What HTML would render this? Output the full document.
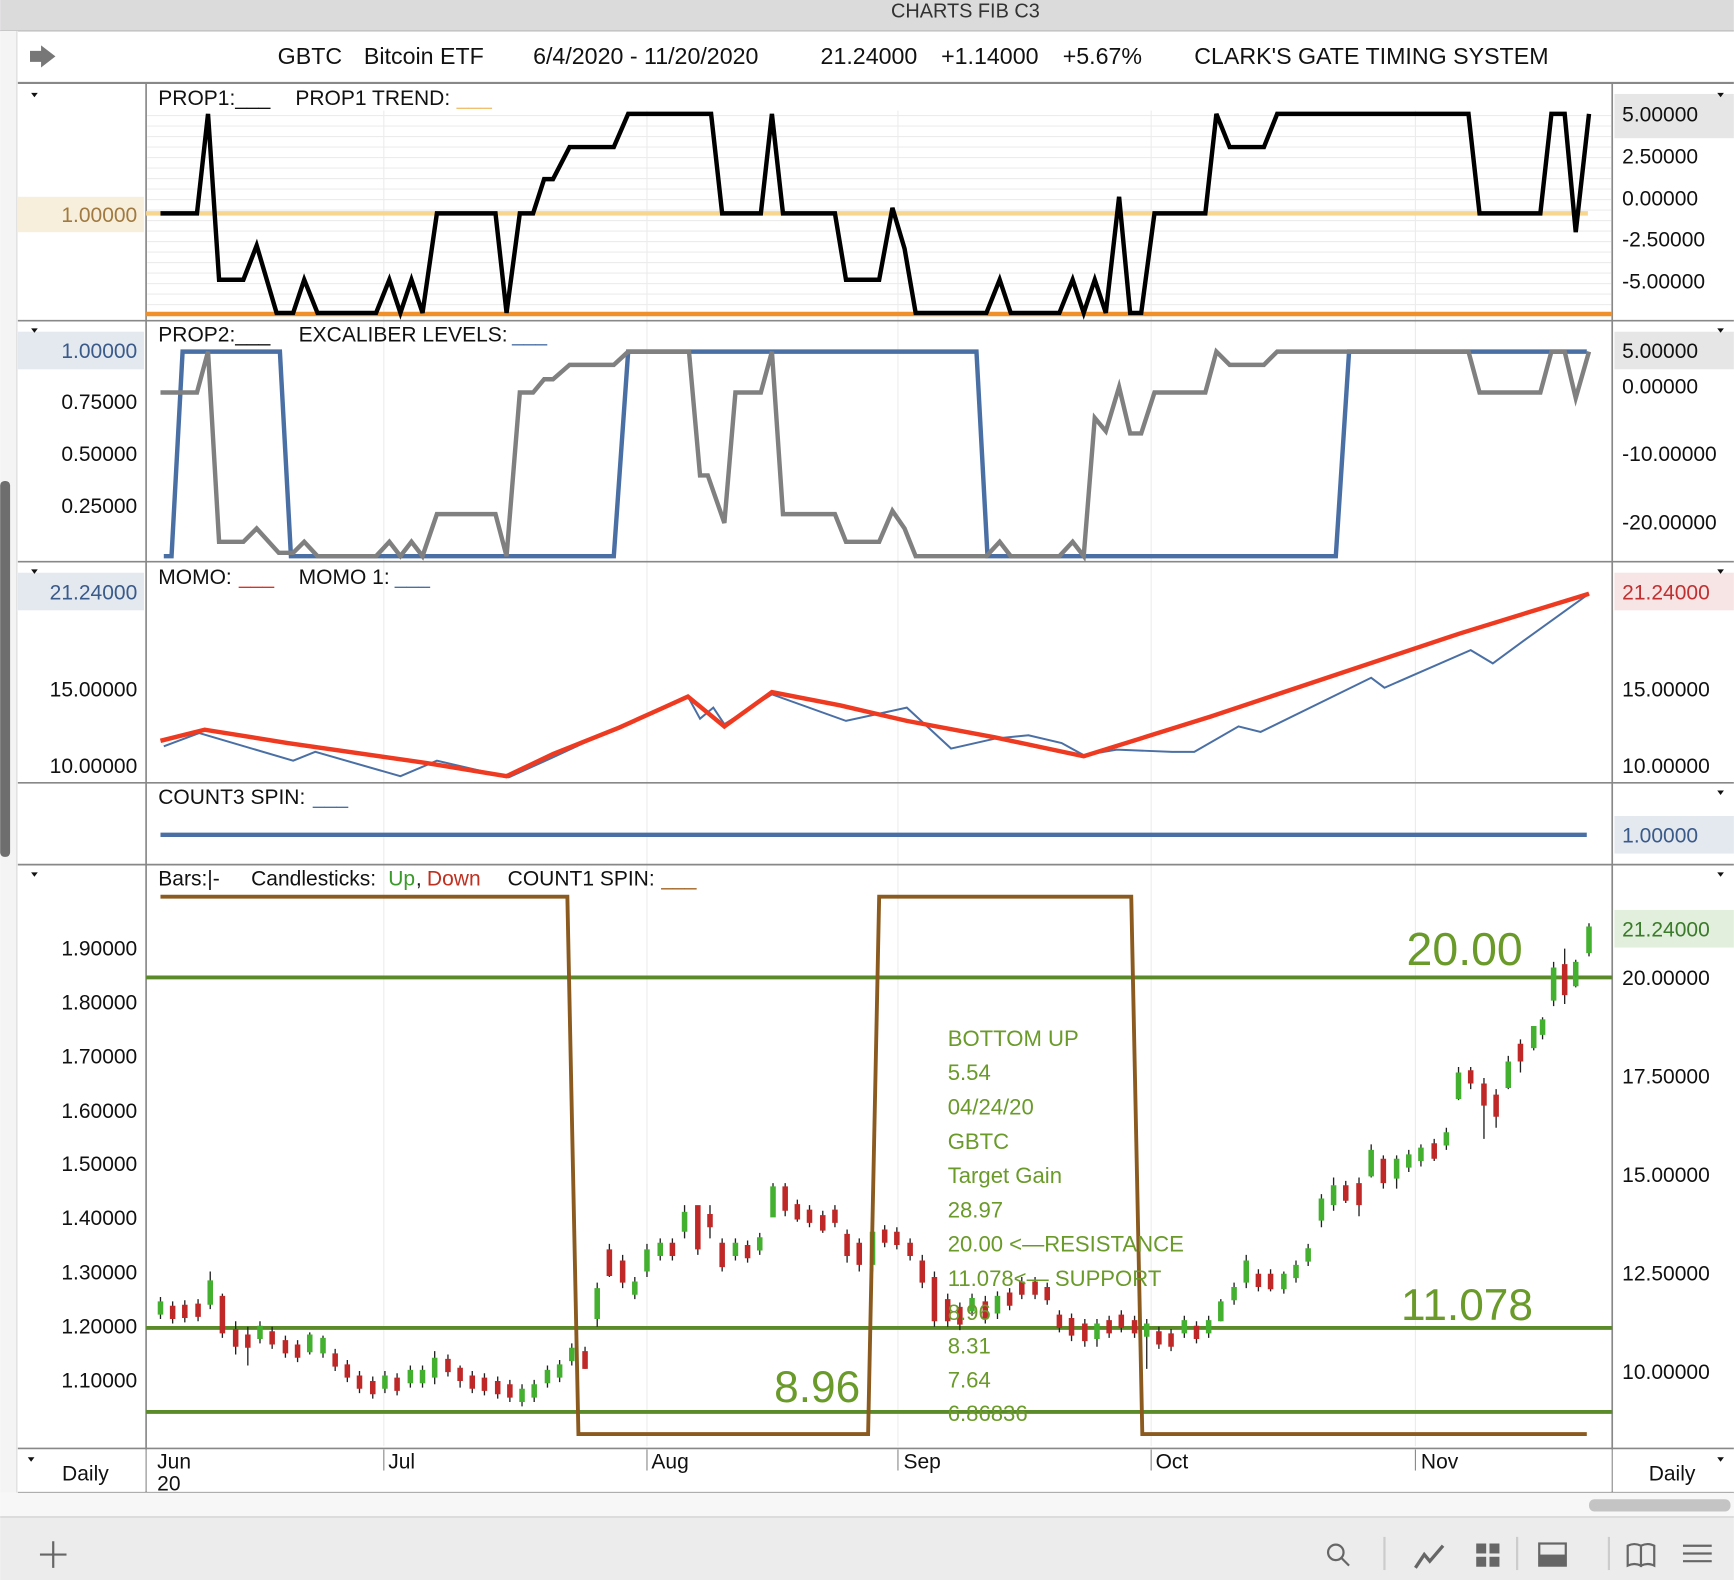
<!DOCTYPE html>
<html><head><meta charset="utf-8"><style>
html,body{margin:0;padding:0;background:#fff;}
svg{display:block;font-family:"Liberation Sans",sans-serif;}
</style></head><body>
<svg width="1734" height="1580" viewBox="0 0 1568 1429" xmlns="http://www.w3.org/2000/svg">
<defs>
<pattern id="hg" x="0" y="104" width="20" height="9.5" patternUnits="userSpaceOnUse"><line x1="0" y1="0.5" x2="20" y2="0.5" stroke="#ececec" stroke-width="1"/></pattern>
</defs>
<rect x="0" y="0" width="1568" height="1429" fill="#fff"/>
<rect x="0" y="0" width="1568" height="28" fill="#dcdbdc"/>
<line x1="0" y1="28" x2="1568" y2="28" stroke="#b8b8b8"/>
<text x="873" y="16" font-size="18" text-anchor="middle" fill="#333">CHARTS FIB C3</text>
<rect x="0" y="28" width="16" height="1322" fill="#f4f4f4"/>
<line x1="15" y1="28" x2="15" y2="1350" stroke="#ddd"/>
<rect x="0" y="435" width="9" height="340" rx="4" fill="#6e6e6e"/>
<path d="M27 46 L37 46 L37 41 L50 51 L37 61 L37 56 L27 56 Z" fill="#777"/>
<g font-size="21" fill="#111">
<text x="251" y="58">GBTC</text><text x="329" y="58">Bitcoin ETF</text>
<text x="482" y="58">6/4/2020 - 11/20/2020</text>
<text x="742" y="58">21.24000</text><text x="851" y="58">+1.14000</text><text x="961" y="58">+5.67%</text>
<text x="1080" y="58">CLARK'S GATE TIMING SYSTEM</text>
</g>
<line x1="16" y1="75" x2="1568" y2="75" stroke="#888" stroke-width="2"/>
<!-- grid -->
<rect x="133" y="104" width="1324" height="180" fill="url(#hg)"/>
<g stroke="#ececec" stroke-width="1">
<line x1="347" y1="100" x2="347" y2="1308"/><line x1="585" y1="100" x2="585" y2="1308"/><line x1="812" y1="100" x2="812" y2="1308"/><line x1="1041" y1="100" x2="1041" y2="1308"/><line x1="1280" y1="100" x2="1280" y2="1308"/>
</g>
<g stroke="#888" stroke-width="1.5">
<line x1="132" y1="75" x2="132" y2="1350"/><line x1="1458" y1="75" x2="1458" y2="1350"/>
<line x1="16" y1="290" x2="1568" y2="290"/><line x1="16" y1="508" x2="1568" y2="508"/>
<line x1="16" y1="708" x2="1568" y2="708"/><line x1="16" y1="782" x2="1568" y2="782"/>
<line x1="16" y1="1310" x2="1568" y2="1310"/><line x1="16" y1="1350" x2="1568" y2="1350"/>
</g>
<!-- panel 1 -->
<rect x="16" y="178" width="114" height="32" fill="#f7efdc"/>
<text x="124" y="201" font-size="19" fill="#a07a40" text-anchor="end">1.00000</text>
<rect x="1460" y="85" width="108" height="40" fill="#e6e6e6"/>
<g font-size="19" fill="#111">
<text x="1467" y="110">5.00000</text><text x="1467" y="148">2.50000</text><text x="1467" y="186">0.00000</text><text x="1467" y="223">-2.50000</text><text x="1467" y="261">-5.00000</text>
<text x="143" y="95">PROP1:___</text><text x="267" y="95">PROP1 TREND:</text>
</g>
<text x="413" y="95" font-size="19" fill="#f0c070">___</text>
<line x1="132" y1="193" x2="1436" y2="193" stroke="#f7d690" stroke-width="4"/>
<line x1="132" y1="284" x2="1458" y2="284" stroke="#f0902a" stroke-width="4"/>
<polyline fill="none" stroke="#000" stroke-width="4" points="145,193 178,193 188,103 198,253 220,253 232,222 250,283 265,283 275,253 287,283 340,283 352,253 362,283 372,253 382,283 395,193 448,193 458,283 470,193 482,193 492,162 500,162 515,133 555,133 568,103 643,103 653,193 688,193 698,103 708,193 755,193 765,253 795,253 807,188 818,225 828,283 892,283 904,253 914,283 958,283 970,253 980,283 990,253 1000,283 1012,178 1022,283 1032,283 1044,193 1090,193 1100,103 1112,133 1143,133 1155,103 1328,103 1338,193 1393,193 1403,103 1415,103 1425,210 1437,103"/>
<!-- panel 2 -->
<rect x="16" y="300" width="114" height="34" fill="#e4e8ef"/>
<rect x="1460" y="300" width="108" height="34" fill="#e6e6e6"/>
<g font-size="19" fill="#111">
<text x="124" y="324" text-anchor="end" fill="#3a5a8a">1.00000</text><text x="124" y="370" text-anchor="end">0.75000</text><text x="124" y="417" text-anchor="end">0.50000</text><text x="124" y="464" text-anchor="end">0.25000</text>
<text x="1467" y="324">5.00000</text><text x="1467" y="356">0.00000</text><text x="1467" y="417">-10.00000</text><text x="1467" y="479">-20.00000</text>
<text x="143" y="309">PROP2:___</text><text x="270" y="309">EXCALIBER LEVELS:</text>
</g>
<text x="463" y="309" font-size="19" fill="#4a6fa5">___</text>
<polyline fill="none" stroke="#4a6fa5" stroke-width="4" points="148,503 155,503 165,318 253,318 263,503 555,503 568,318 883,318 893,503 1208,503 1220,318 1435,318"/>
<polyline fill="none" stroke="#808080" stroke-width="4" points="145,355 178,355 188,318 198,490 220,490 232,478 252,500 265,500 275,490 287,503 340,503 352,490 362,503 372,490 382,503 395,465 448,465 458,503 470,355 482,355 492,343 500,343 515,330 555,330 568,318 623,318 633,430 640,430 655,473 665,355 688,355 698,318 708,465 755,465 765,490 795,490 807,462 818,478 828,503 892,503 904,490 914,503 958,503 970,490 980,503 990,378 1000,390 1012,350 1022,392 1032,392 1044,355 1090,355 1100,318 1112,330 1143,330 1155,318 1328,318 1338,355 1393,355 1403,318 1415,318 1425,360 1437,318"/>
<!-- panel 3 -->
<rect x="16" y="518" width="114" height="34" fill="#e4e8ef"/>
<rect x="1460" y="518" width="108" height="34" fill="#f7e4e4"/>
<g font-size="19" fill="#111">
<text x="124" y="542" text-anchor="end" fill="#3a5a8a">21.24000</text><text x="124" y="630" text-anchor="end">15.00000</text><text x="124" y="699" text-anchor="end">10.00000</text>
<text x="1467" y="542" fill="#c03030">21.24000</text><text x="1467" y="630">15.00000</text><text x="1467" y="699">10.00000</text>
<text x="143" y="528">MOMO:</text><text x="270" y="528">MOMO 1:</text>
</g>
<text x="216" y="528" font-size="19" fill="#e03020">___</text><text x="357" y="528" font-size="19" fill="#4a6fa5">___</text>
<polyline fill="none" stroke="#4a6fa5" stroke-width="1.8" points="148,675 180,663 265,688 285,680 362,702 395,688 460,703 500,685 560,657 622,630 633,650 645,640 655,655 698,628 765,652 820,640 860,677 900,668 930,665 960,672 980,683 1010,678 1060,680 1080,680 1120,657 1140,662 1240,613 1252,622 1330,588 1350,600 1380,578 1437,537"/>
<polyline fill="none" stroke="#ee3a20" stroke-width="4" points="145,670 185,660 260,672 385,690 458,702 500,682 560,658 600,640 622,630 655,657 698,626 760,638 820,652 900,667 980,684 1095,648 1320,573 1437,537"/>
<!-- panel 4 -->
<text x="143" y="727" font-size="19" fill="#111">COUNT3 SPIN:</text><text x="283" y="727" font-size="19" fill="#4a6fa5">___</text>
<line x1="145" y1="755" x2="1435" y2="755" stroke="#4a6fa5" stroke-width="4"/>
<rect x="1460" y="738" width="108" height="34" fill="#e4e8ef"/>
<text x="1467" y="762" font-size="19" fill="#3a5a8a">1.00000</text>
<!-- panel 5 -->
<g font-size="19" fill="#111">
<text x="143" y="801">Bars:|-</text><text x="227" y="801">Candlesticks:</text><text x="459" y="801">COUNT1 SPIN:</text>
<text x="124" y="864" text-anchor="end">1.90000</text><text x="124" y="913" text-anchor="end">1.80000</text><text x="124" y="962" text-anchor="end">1.70000</text><text x="124" y="1011" text-anchor="end">1.60000</text><text x="124" y="1059" text-anchor="end">1.50000</text><text x="124" y="1108" text-anchor="end">1.40000</text><text x="124" y="1157" text-anchor="end">1.30000</text><text x="124" y="1206" text-anchor="end">1.20000</text><text x="124" y="1255" text-anchor="end">1.10000</text>
<text x="1467" y="891">20.00000</text><text x="1467" y="980">17.50000</text><text x="1467" y="1069">15.00000</text><text x="1467" y="1158">12.50000</text><text x="1467" y="1247">10.00000</text>
</g>
<text x="351" y="801" font-size="19" fill="#3a9a2a">Up</text><text x="376" y="801" font-size="19" fill="#111">,</text><text x="386" y="801" font-size="19" fill="#c03020">Down</text>
<text x="598" y="801" font-size="19" fill="#a0601e">___</text>
<rect x="1460" y="823" width="108" height="34" fill="#e2efdc"/>
<text x="1467" y="847" font-size="19" fill="#3a7a2a">21.24000</text>
<line x1="132" y1="884" x2="1458" y2="884" stroke="#5a8a2a" stroke-width="3.5"/>
<line x1="132" y1="1201" x2="1458" y2="1201" stroke="#5a8a2a" stroke-width="3.5"/>
<line x1="132" y1="1277" x2="1458" y2="1277" stroke="#5a8a2a" stroke-width="3.5"/>
<!-- candles -->
<path stroke="#222" stroke-width="1.2" fill="none" d="M145 1173v20M156 1177v20M167 1176v20M179 1175v20M190 1150v34M201 1170v40M213 1195v30M224 1200v35M235 1195v20M246 1200v20M258 1208v20M269 1212v20M280 1205v20M292 1208v20M303 1220v20M314 1230v20M325 1240v20M337 1245v20M348 1240v20M359 1242v20M371 1235v20M382 1235v20M393 1222v30M405 1225v20M416 1235v20M427 1240v20M438 1242v20M450 1245v20M461 1248v20M472 1252v20M483 1248v20M495 1235v20M506 1230v20M517 1215v20M529 1218v20M540 1160v40M551 1125v30M563 1135v30M574 1155v20M585 1125v30M597 1120v20M608 1120v20M619 1090v30M631 1095v40M642 1090v30M653 1120v30M665 1120v20M676 1122v20M687 1115v20M699 1070v30M710 1070v30M721 1085v20M732 1090v20M744 1095v20M755 1090v20M766 1112v30M777 1120v30M789 1110v40M800 1108v20M811 1110v20M823 1120v20M834 1135v30M845 1150v50M857 1170v30M868 1178v25M879 1170v20M891 1172v25M902 1168v25M913 1165v20M924 1155v20M936 1155v20M947 1160v20M958 1185v20M969 1188v25M981 1193v25M992 1193v25M1003 1190v20M1014 1185v20M1026 1190v20M1037 1193v45M1048 1200v20M1059 1202v20M1071 1190v20M1082 1195v20M1093 1190v20M1104 1175v20M1116 1160v20M1127 1135v30M1138 1148v20M1149 1148v20M1161 1150v20M1172 1140v20M1183 1125v20M1195 1080v30M1206 1065v30M1217 1068v20M1229 1065v35M1240 1035v30M1251 1045v30M1263 1045v30M1274 1040v20M1285 1035v20M1297 1030v20M1308 1020v20M1319 965v30M1330 965v20M1342 975v55M1353 985v35M1364 955v30M1375 940v30M1387 930v20M1395 920v20M1405 870v40M1415 858v50M1425 868v25M1437 835v30"/>
<path stroke="#44b030" stroke-width="5" fill="none" d="M145 1177v12M190 1158v22M235 1199v12M280 1207v16M292 1210v14M348 1244v12M371 1239v12M382 1239v12M393 1228v18M472 1256v12M483 1252v12M495 1239v12M506 1234v12M517 1219v12M540 1165v28M574 1159v12M585 1130v20M597 1124v12M619 1096v18M665 1124v12M687 1119v12M699 1073v28M789 1114v30M879 1174v12M902 1172v16M992 1197v14M1037 1197v12M1071 1194v12M1093 1194v12M1104 1177v18M1116 1164v12M1127 1140v20M1161 1152v14M1172 1144v12M1183 1129v12M1195 1084v20M1206 1072v18M1240 1040v24M1263 1048v18M1274 1044v12M1285 1038v12M1308 1024v12M1319 970v24M1364 960v24M1387 928v20M1395 922v14M1405 875v30M1425 870v22M1437 838v24"/>
<path stroke="#c02828" stroke-width="5" fill="none" d="M156 1181v12M167 1180v12M179 1179v12M201 1172v34M213 1202v16M224 1207v12M246 1204v12M258 1212v12M269 1216v12M303 1224v12M314 1234v12M325 1244v12M337 1249v12M359 1246v12M405 1229v12M416 1237v12M427 1244v12M438 1246v12M450 1249v12M461 1252v12M529 1222v16M551 1130v24M563 1140v20M608 1124v12M631 1090v40M642 1098v12M653 1124v22M676 1126v12M710 1073v22M721 1089v14M732 1094v12M744 1099v14M755 1094v12M766 1116v20M777 1124v20M800 1112v12M811 1114v12M823 1124v12M834 1140v20M845 1155v40M857 1175v20M868 1182v16M891 1177v16M913 1169v12M924 1159v12M936 1159v12M947 1164v12M958 1189v12M969 1192v16M981 1197v16M1003 1194v12M1014 1189v12M1026 1194v12M1048 1204v12M1059 1206v12M1082 1199v12M1138 1152v12M1149 1152v14M1217 1072v14M1229 1070v20M1251 1048v22M1297 1034v14M1330 968v12M1342 980v20M1353 990v20M1375 944v16M1415 872v28"/>
<polyline fill="none" stroke="#8b5a1e" stroke-width="3.5" points="145,811 513,811 523,1297 785,1297 795,811 1023,811 1033,1297 1435,1297"/>
<g fill="#6a9a2a">
<text x="1272" y="873" font-size="42">20.00</text>
<text x="1267" y="1194" font-size="40">11.078</text>
<text x="700" y="1268" font-size="40">8.96</text>
<g font-size="20">
<text x="857" y="946">BOTTOM UP</text><text x="857" y="977">5.54</text><text x="857" y="1008">04/24/20</text><text x="857" y="1039">GBTC</text><text x="857" y="1070">Target Gain</text><text x="857" y="1101">28.97</text><text x="857" y="1132">20.00 &lt;—RESISTANCE</text><text x="857" y="1163">11.078&lt;— SUPPORT</text><text x="857" y="1194">8.96</text><text x="857" y="1224">8.31</text><text x="857" y="1255">7.64</text><text x="857" y="1285">6.86836</text>
</g></g>
<!-- x axis -->
<rect x="16" y="1311" width="1552" height="38" fill="#fff"/>
<g stroke="#888"><line x1="347" y1="1311" x2="347" y2="1330"/><line x1="585" y1="1311" x2="585" y2="1330"/><line x1="812" y1="1311" x2="812" y2="1330"/><line x1="1041" y1="1311" x2="1041" y2="1330"/><line x1="1280" y1="1311" x2="1280" y2="1330"/><line x1="132" y1="1311" x2="132" y2="1350"/><line x1="1458" y1="1311" x2="1458" y2="1350"/></g>
<g font-size="19" fill="#111">
<text x="142" y="1328">Jun</text><text x="142" y="1348">20</text><text x="351" y="1328">Jul</text><text x="589" y="1328">Aug</text><text x="817" y="1328">Sep</text><text x="1045" y="1328">Oct</text><text x="1285" y="1328">Nov</text>
<text x="56" y="1339">Daily</text><text x="1491" y="1339">Daily</text>
</g>
<g fill="#111"><path d="M28 84 l6 0 l-3 4z"/><path d="M28 297 l6 0 l-3 4z"/><path d="M28 515 l6 0 l-3 4z"/><path d="M28 789 l6 0 l-3 4z"/><path d="M25 1318 l6 0 l-3 4z"/>
<path d="M1553 84 l6 0 l-3 4z"/><path d="M1553 297 l6 0 l-3 4z"/><path d="M1553 515 l6 0 l-3 4z"/><path d="M1553 715 l6 0 l-3 4z"/><path d="M1553 789 l6 0 l-3 4z"/><path d="M1553 1318 l6 0 l-3 4z"/></g>
<rect x="0" y="1350" width="1568" height="22" fill="#f7f7f7"/>
<rect x="1437" y="1356" width="128" height="11" rx="5" fill="#c4c4c4"/>
<rect x="0" y="1372" width="1568" height="57" fill="#ececec"/>
<line x1="0" y1="1372" x2="1568" y2="1372" stroke="#ccc"/>
<g stroke="#666" stroke-width="2" fill="none">
<path d="M48 1394 v24 M36 1406 h24"/>
<circle cx="1208" cy="1404" r="7"/><path d="M1213 1409 l7 7"/>
<line x1="1252" y1="1390" x2="1252" y2="1420" stroke="#ccc"/>
<path d="M1280 1418 l8 -12 l5 6 l12 -14" stroke-width="3"/>
<line x1="1372" y1="1390" x2="1372" y2="1420" stroke="#ccc"/>
<line x1="1455" y1="1390" x2="1455" y2="1420" stroke="#ccc"/>
<path d="M1472 1398 q6 -3 12 0 v18 q-6 -3 -12 0z M1484 1398 q6 -3 12 0 v18 q-6 -3 -12 0z"/>
<path d="M1522 1398 h26 M1522 1405 h26 M1522 1412 h26"/>
</g>
<g fill="#666"><rect x="1335" y="1396" width="9" height="9"/><rect x="1347" y="1396" width="9" height="9"/><rect x="1335" y="1408" width="9" height="9"/><rect x="1347" y="1408" width="9" height="9"/>
<rect x="1392" y="1396" width="24" height="20" fill="none" stroke="#666" stroke-width="2"/><rect x="1392" y="1406" width="24" height="10"/></g>
</svg>
</body></html>
